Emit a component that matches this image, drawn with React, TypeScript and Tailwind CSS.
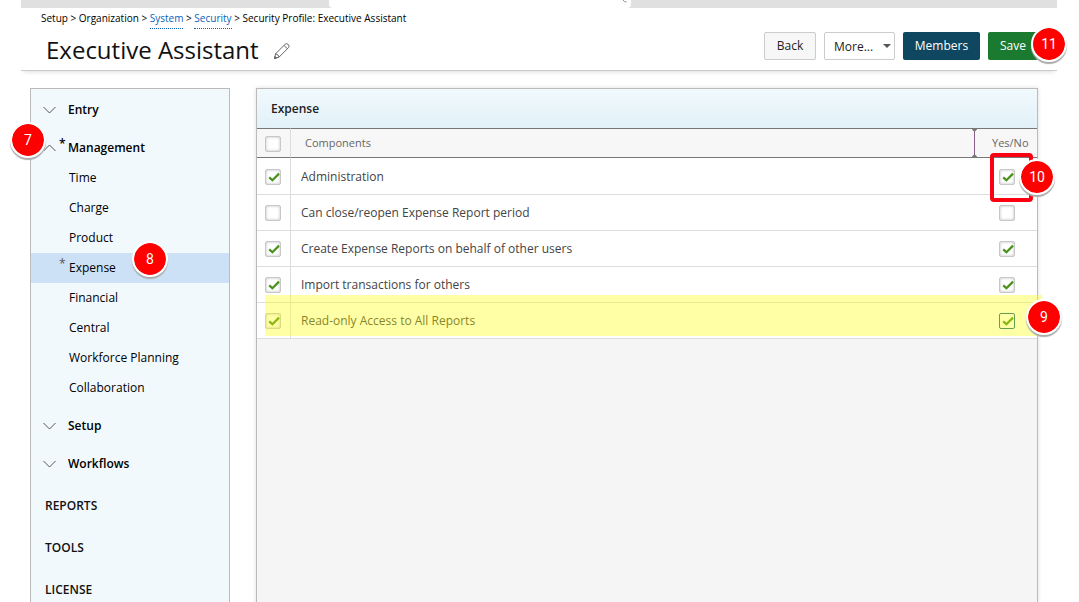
import { useState, ReactNode } from "react";

interface Permission {
  name: string;
  selected: boolean;
  allowed: boolean;
}

const permissions: Permission[] = [
  { name: "Administration", selected: true, allowed: true },
  { name: "Can close/reopen Expense Report period", selected: false, allowed: false },
  { name: "Create Expense Reports on behalf of other users", selected: true, allowed: true },
  { name: "Import transactions for others", selected: true, allowed: true },
  { name: "Read-only Access to All Reports", selected: true, allowed: true },
];

const managementItems = [
  "Time",
  "Charge",
  "Product",
  "Expense",
  "Financial",
  "Central",
  "Workforce Planning",
  "Collaboration",
];

const App: React.FC = () => {
  return (
    <div className="flex h-screen flex-col overflow-hidden bg-white pr-[22px] pl-[21px] font-['Open_Sans',sans-serif] text-[12px] text-[#222]">
      <TabStrip />
      <Header />
      <main className="flex flex-1 gap-[26px] pt-[17px] pr-[19px] pl-[9px]">
        <Sidebar />
        <ExpensePanel />
      </main>
    </div>
  );
};

const TabStrip: React.FC = () => (
  <div className="flex h-2 shrink-0 bg-[#e0e0e0]">
    <div className="w-77" />
    <div className="flex w-[302px] justify-end rounded-b-sm bg-white pr-1">
      <svg width="5" height="3" viewBox="0 0 5 3" fill="none" stroke="#8a8fa0">
        <path d="M1 0 Q2 2 4.5 2" />
      </svg>
    </div>
  </div>
);

const Header: React.FC = () => (
  <header className="relative flex h-[63px] shrink-0 justify-between border-b border-[#ccc] pr-[19px] pl-5 shadow-[0_4px_4px_-3px_#ddd]">
    <div>
      <nav aria-label="Breadcrumb" className="pt-0.5 text-[10px] leading-4 text-black">
        Setup &gt; Organization &gt; <Crumb>System</Crumb> &gt; <Crumb>Security</Crumb> &gt; Security
        Profile: Executive Assistant
      </nav>
      <div className="flex items-center gap-3.5 pt-2 pl-[5px]">
        <h1 className="text-[24px] leading-8 text-[#111]">Executive Assistant</h1>
        <button type="button" aria-label="Rename profile" className="pt-0.5">
          <svg width="18" height="18" viewBox="0 0 18 18" fill="none" stroke="#666">
            <path d="M1.5 16.5 L2.6 11.8 L12.2 2.2 Q13.6 0.9 15.2 2.4 Q16.9 4.2 15.5 5.6 L6 15.2 Z" />
            <path d="M2.6 11.8 Q5.4 12.2 6 15.2 M11 3.4 L14.4 6.8" />
            <path d="M1.5 16.5 L2 14.4 L3.6 16 Z" fill="#666" />
          </svg>
        </button>
      </div>
    </div>

    <div className="flex gap-2 pt-6">
      <button type="button" className="h-7 w-13 rounded-xs border border-[#ccc] bg-[#f7f7f7]">
        Back
      </button>
      <div className="grid h-7 w-[71px] items-center">
        <select
          aria-label="More actions"
          className="col-start-1 row-start-1 h-7 w-full appearance-none rounded-xs border border-[#ccc] bg-white pt-0.5 pl-[9px]"
        >
          <option>More...</option>
        </select>
        <svg
          className="pointer-events-none col-start-1 row-start-1 mr-1 justify-self-end"
          width="8"
          height="4"
          viewBox="0 0 8 4"
        >
          <path d="M0 0 H8 L4 4 Z" fill="#555" />
        </svg>
      </div>
      <button type="button" className="h-7 w-[77px] rounded-xs bg-[#0e475f] text-white">
        Members
      </button>
      <div className="relative h-7">
        <button type="button" className="h-7 w-[50px] rounded-xs bg-[#1a7b30] text-white">
          Save
        </button>
        <Marker className="-top-1.5 -right-[29px]">11</Marker>
      </div>
    </div>
  </header>
);

const Crumb: React.FC<{ children: ReactNode }> = ({ children }) => (
  <a href="#" className="border-b border-dotted border-[#0a62b8] pb-[3px] text-[#0a62b8]">
    {children}
  </a>
);

const Sidebar: React.FC = () => (
  <nav
    aria-label="Security areas"
    className="w-[200px] shrink-0 border border-b-0 border-[#bbb] bg-[#f1f9fd] pt-0.5 text-black"
  >
    <Group name="Entry" />
    <Group name="Management" open changed>
      <Marker className="-top-[7px] -left-[21px]">7</Marker>
    </Group>
    <ul className="-mt-1 mb-1">
      {managementItems.map((item) => (
        <li key={item} className="relative">
          <a
            href="#"
            className={`flex h-[30px] items-center pl-7 ${item === "Expense" ? "bg-[#cde1f6]" : ""}`}
          >
            <span className="w-2.5 pb-2 text-[#555]">{item === "Expense" && "*"}</span>
            {item}
          </a>
          {item === "Expense" && <Marker className="-top-3 left-[101px]">8</Marker>}
        </li>
      ))}
    </ul>
    <Group name="Setup" />
    <Group name="Workflows" />
    <div className="pt-0.5">
      {["REPORTS", "TOOLS", "LICENSE"].map((name) => (
        <a key={name} href="#" className="flex h-[42px] items-center pl-3.5 font-semibold text-[#111]">
          {name}
        </a>
      ))}
    </div>
  </nav>
);

interface GroupProps {
  name: string;
  open?: boolean;
  changed?: boolean;
  children?: ReactNode;
}

const Group: React.FC<GroupProps> = ({ name, open, changed, children }) => (
  <div className="relative">
    <button type="button" aria-expanded={!!open} className="flex h-[38px] w-full items-center pl-3 font-semibold">
      <svg width="13" height="8" viewBox="0 0 13 8" fill="none" stroke="#555">
        <path d={open ? "M0.5 7 L6.5 1 L12.5 7" : "M0.5 1 L6.5 7 L12.5 1"} />
      </svg>
      <span className="ml-[3px] w-[9px] pb-2 text-left">{changed && "*"}</span>
      {name}
    </button>
    {children}
  </div>
);

const ExpensePanel: React.FC = () => (
  <section className="flex-1 border border-b-0 border-[#bbb] bg-[#f5f5f5] shadow-[0_0_4px_#ddd]">
    <h2 className="flex h-[39px] items-center bg-gradient-to-b from-[#f1f9fd] to-[#e2f1f8] pl-3.5 font-semibold">
      Expense
    </h2>
    <div className="relative">
      <table className="w-full table-fixed border-separate border-spacing-0 text-left">
        <colgroup>
          <col className="w-[34px]" />
          <col />
          <col className="w-[63px]" />
        </colgroup>
        <thead className="bg-[#f7f7f7] text-[11px] text-[#666]">
          <tr className="h-[30px]">
            <th className="border-y border-r border-y-[#777] border-r-[#ddd] pt-0.5 pl-2">
              <CheckBox label="Select all components" />
            </th>
            <th className="relative border-y border-[#777] pl-3.5 font-normal">
              Components
              <svg className="absolute -top-px -right-[3px]" width="5" height="30" viewBox="0 0 5 30">
                <path d="M2.5 0 V30" stroke="#8d5f88" />
                <path d="M0 0 H5 V1.5 L2.5 4 L0 1.5 Z M0 30 H5 V28.5 L2.5 26 L0 28.5 Z" fill="#777" />
              </svg>
            </th>
            <th className="border-y border-[#777] pl-[18px] font-normal">Yes/No</th>
          </tr>
        </thead>
        <tbody className="bg-white text-[#444]">
          {permissions.map((row, i) => (
            <tr key={row.name} className="h-9 first:h-[37px]">
              <td className="border-r border-b border-[#ddd] pt-px pl-2">
                <CheckBox label={`Select ${row.name}`} initial={row.selected} />
              </td>
              <td className="border-b border-[#ddd] pt-px pl-2.5">{row.name}</td>
              <td className="relative border-b border-[#ddd] pt-px pl-[25px]">
                <CheckBox
                  label={`Allow ${row.name}`}
                  initial={row.allowed}
                  focused={i === permissions.length - 1}
                />
                {i === 0 && (
                  <>
                    <div className="pointer-events-none absolute -top-[5px] left-4 h-[49px] w-[43px] rounded-sm border-4 border-[#fa0010]" />
                    <Marker className="top-px -right-[18px]">10</Marker>
                  </>
                )}
              </td>
            </tr>
          ))}
        </tbody>
      </table>
      {/* highlight over the read-only row */}
      <div className="pointer-events-none absolute -right-[5px] bottom-[3px] left-2 h-[41px] bg-[#ffff00]/35" />
      <Marker className="-right-[25px] bottom-1">9</Marker>
    </div>
  </section>
);

interface CheckBoxProps {
  label: string;
  initial?: boolean;
  focused?: boolean;
}

const CheckBox: React.FC<CheckBoxProps> = ({ label, initial = false, focused }) => {
  const [checked, setChecked] = useState(initial);

  return (
    <span className="grid size-4 place-items-center">
      <input
        type="checkbox"
        aria-label={label}
        checked={checked}
        onChange={() => setChecked(!checked)}
        className={`col-start-1 row-start-1 size-4 appearance-none rounded-xs border bg-white ${
          focused ? "border-[#146a80]" : "border-[#c8c8c8] shadow-[inset_0_0_3px_#bbb]"
        }`}
      />
      {checked && (
        <svg
          className="pointer-events-none col-start-1 row-start-1 ml-px"
          width="12"
          height="10"
          viewBox="0 0 12 10"
          fill="none"
          stroke="#4a921b"
          strokeWidth="2.2"
        >
          <path d="M1.2 5.4 L4.4 8.2 L11 1.6" />
        </svg>
      )}
    </span>
  );
};

// numbered step marker
const Marker: React.FC<{ className: string; children: ReactNode }> = ({ className, children }) => (
  <span
    className={`absolute z-10 flex size-9 items-center justify-center rounded-full border-2 border-white bg-[#fe0000] bg-clip-padding font-[Roboto,sans-serif] text-[14px] font-normal text-white shadow-[0_2px_1px_#aaa] ${className}`}
  >
    {children}
  </span>
);

export default App;
